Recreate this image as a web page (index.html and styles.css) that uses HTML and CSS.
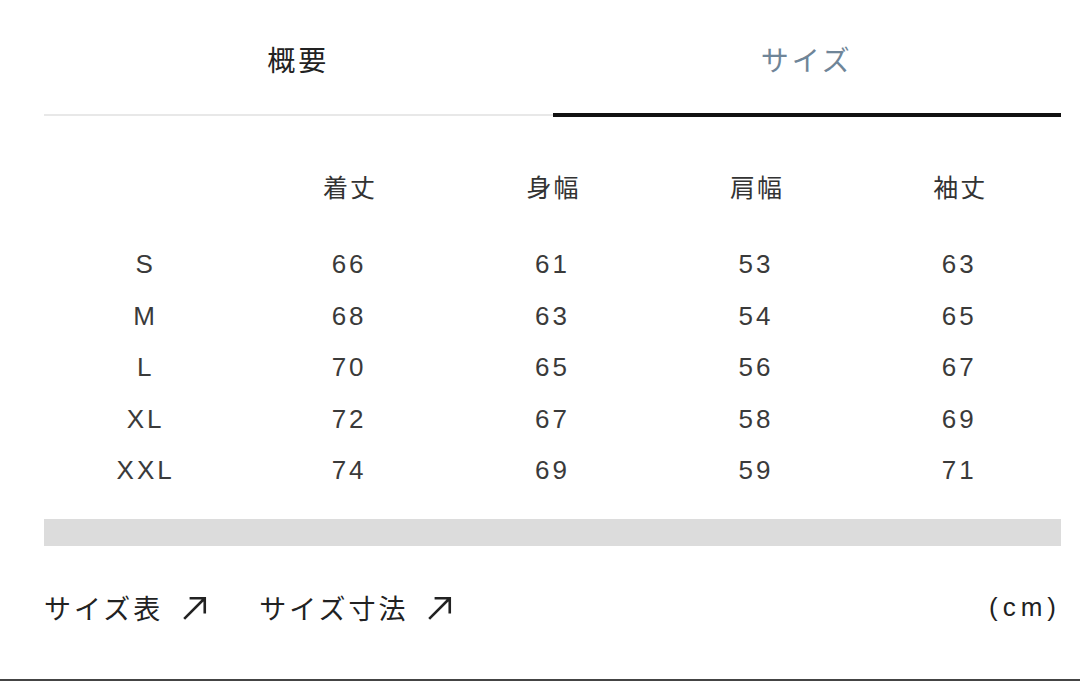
FILE: index.html
```html
<!DOCTYPE html>
<html lang="ja">
<head>
<meta charset="utf-8">
<link rel="stylesheet" href="styles.css">
</head>
<body>
<div class="page">
  <div class="tabs">
    <div class="tab">概要</div>
    <div class="tab active">サイズ</div>
  </div>
  <div class="table">
    <div class="row head">
      <div class="cell"></div>
      <div class="cell">着丈</div>
      <div class="cell">身幅</div>
      <div class="cell">肩幅</div>
      <div class="cell">袖丈</div>
    </div>
    <div class="body">
      <div class="row"><div class="cell">S</div><div class="cell">66</div><div class="cell">61</div><div class="cell">53</div><div class="cell">63</div></div>
      <div class="row"><div class="cell">M</div><div class="cell">68</div><div class="cell">63</div><div class="cell">54</div><div class="cell">65</div></div>
      <div class="row"><div class="cell">L</div><div class="cell">70</div><div class="cell">65</div><div class="cell">56</div><div class="cell">67</div></div>
      <div class="row"><div class="cell">XL</div><div class="cell">72</div><div class="cell">67</div><div class="cell">58</div><div class="cell">69</div></div>
      <div class="row"><div class="cell">XXL</div><div class="cell">74</div><div class="cell">69</div><div class="cell">59</div><div class="cell">71</div></div>
    </div>
  </div>
  <div class="bar"></div>
  <div class="links">
    <a class="link">サイズ表<svg class="arrow" viewBox="0 0 24 24"><path d="M2 22 L21 3 M7 3 H21 V17"/></svg></a>
    <a class="link">サイズ寸法<svg class="arrow" viewBox="0 0 24 24"><path d="M2 22 L21 3 M7 3 H21 V17"/></svg></a>
    <span class="unit">(cm)</span>
  </div>
</div>
<div class="bottom-line"></div>
</body>
</html>
```
FILE: styles.css
```css
html, body {
  margin: 0;
  padding: 0;
  background: #fff;
}
body {
  font-family: "Liberation Sans", "Noto Sans CJK JP", sans-serif;
  color: #333;
  width: 1080px;
  height: 681px;
  overflow: hidden;
}
.page {
  width: 1017px;
  margin-left: 44px;
}
.tabs {
  display: flex;
  align-items: flex-end;
}
.tab {
  flex: 1;
  text-align: center;
  font-size: 28px;
  line-height: 36px;
  letter-spacing: 3px;
  color: #222;
  padding-top: 44px;
  padding-bottom: 34px;
  border-bottom: 2px solid #e8e8e8;
  margin-bottom: 1px;
}
.tab.active {
  color: #6f8598;
  padding-bottom: 33px;
  border-bottom: 4px solid #111;
  margin-bottom: 0;
}
.table {
  margin-top: 43px;
}
.row {
  display: grid;
  grid-template-columns: repeat(5, 1fr);
  height: 51.5px;
  align-items: center;
  text-align: center;
  font-size: 26px;
  letter-spacing: 3px;
  color: #3a3a3a;
}
.row.head {
  height: 52px;
  font-size: 25px;
  letter-spacing: 2px;
  color: #333;
}
.row.head .cell {
  padding-left: 2px;
}
.body {
  margin-top: 27px;
}
.bar {
  margin-top: 22px;
  height: 27px;
  background: #dcdcdc;
}
.links {
  display: flex;
  align-items: center;
  margin-top: 44px;
  height: 36px;
  font-size: 27px;
  letter-spacing: 3px;
  color: #222;
}
.link {
  display: flex;
  align-items: center;
  margin-right: 51px;
}
.arrow {
  width: 26px;
  height: 26px;
  margin-left: 19px;
  fill: none;
  stroke: #222;
  stroke-width: 2.4;
}
.unit {
  margin-left: auto;
  font-size: 26px;
  letter-spacing: 5px;
}
.bottom-line {
  margin-top: 53px;
  height: 2px;
  background: #444;
}
```
